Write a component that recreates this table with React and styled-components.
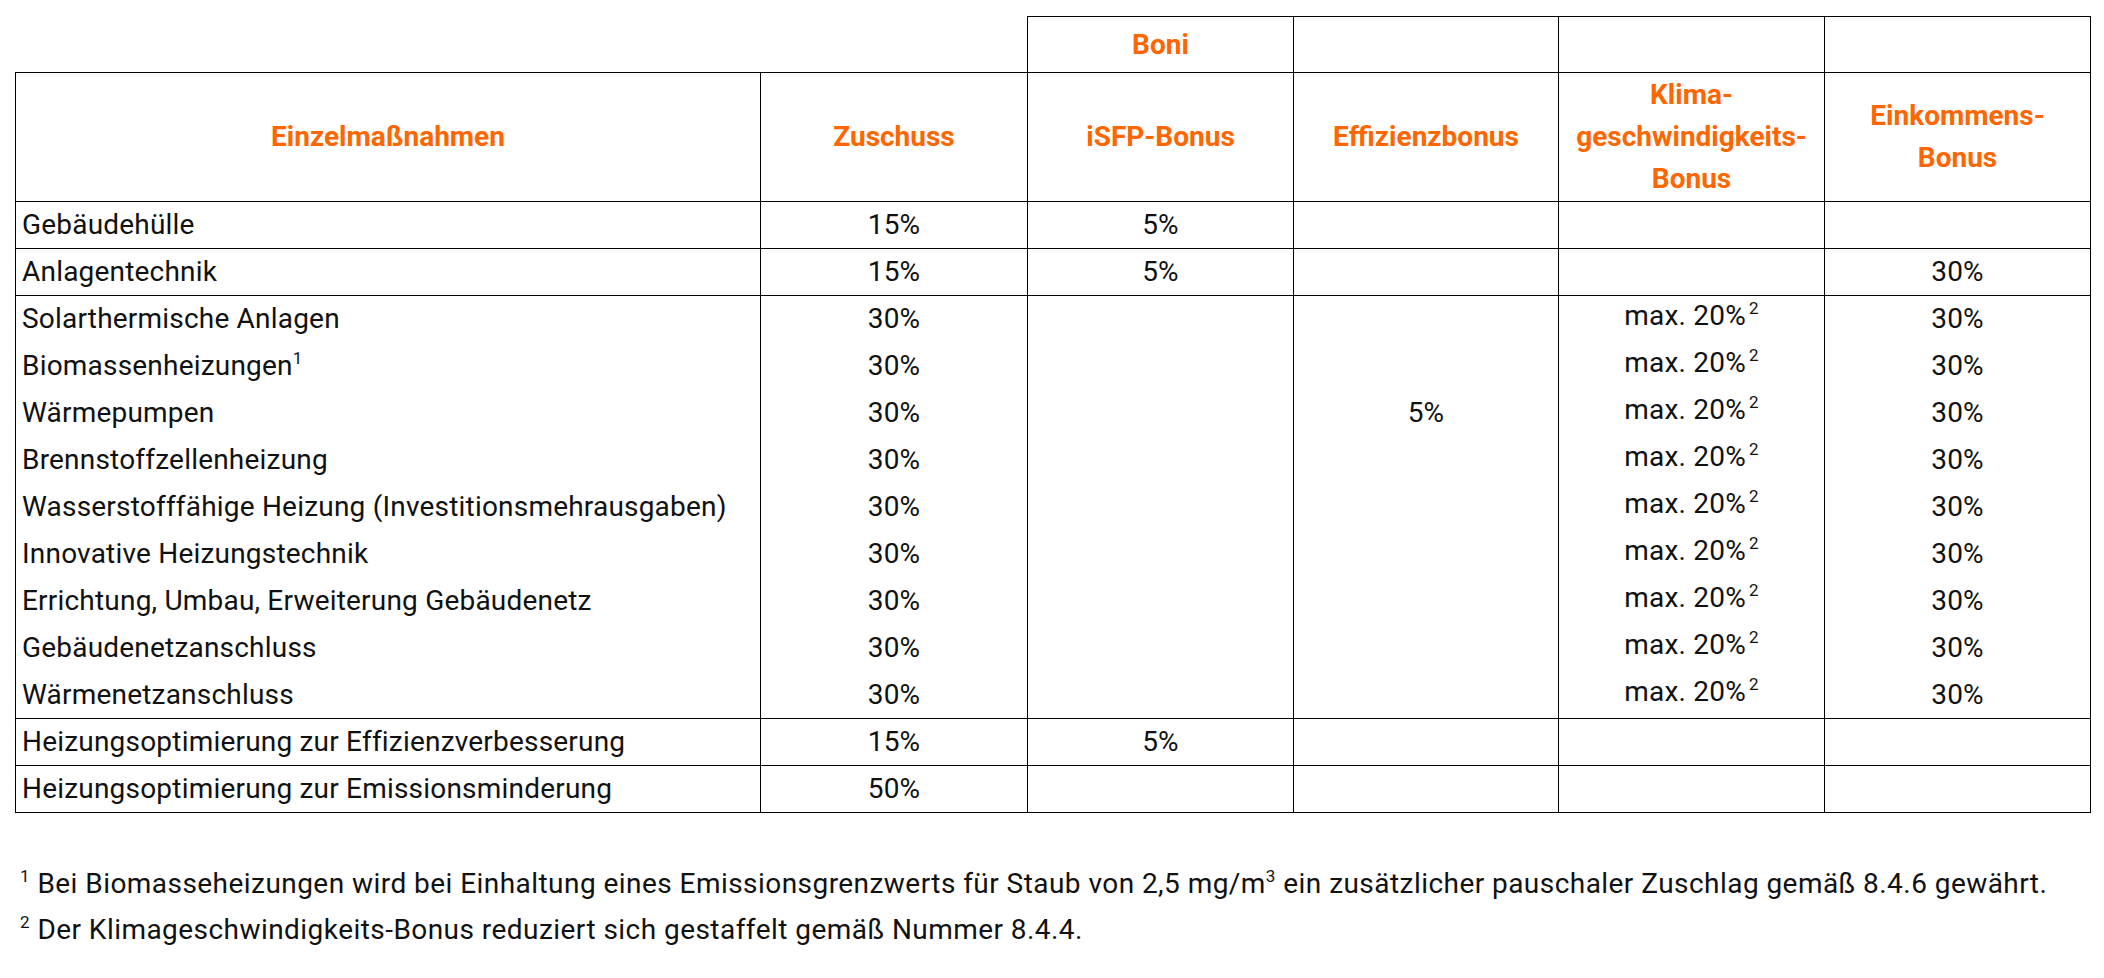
import React from 'react'
import styled, { createGlobalStyle } from 'styled-components'

const GlobalStyle = createGlobalStyle`
  html, body {
    margin: 0;
    padding: 0;
    background: #ffffff;
  }
  body {
    font-family: Roboto, "Liberation Sans", Arial, sans-serif;
    color: #111111;
  }
`

const Page = styled.div`
  padding: 16px 14px 0 15px;
`

const Table = styled.table`
  border-collapse: collapse;
  table-layout: fixed;
  width: 2075px;
  font-size: 28px;
`

const Col = styled.col`
  width: ${p => p.$w}px;
`

const TopRow = styled.tr`
  height: 56px;
`

const HeadRow = styled.tr`
  height: 129px;
`

const HeadCell = styled.th`
  border: ${p => (p.$blank ? 'none' : '1px solid #000')};
  color: #ff6600;
  font-weight: 700;
  font-size: 28px;
  line-height: 42px;
  text-align: center;
  vertical-align: middle;
  padding: 0 4px;
`

const Row = styled.tr`
  height: 47px;

  td {
    border-top: ${p => (p.$cont ? 'none' : '1px solid #000')};
  }

  &:last-child td {
    border-bottom: 1px solid #000;
  }
`

const Cell = styled.td`
  border-left: 1px solid #000;
  border-right: 1px solid #000;
  padding: 0 6px ${p => (p.$lift ? '6px' : '0')};
  text-align: ${p => (p.$left ? 'left' : 'center')};
  vertical-align: middle;
  line-height: 1.2;
  letter-spacing: 0.2px;
  white-space: nowrap;
`

const Sup = styled.sup`
  font-size: 17px;
  line-height: 0;
  vertical-align: 11px;
  margin-left: ${p => (p.$gap ? '3px' : '0')};
`

const Notes = styled.div`
  margin-top: 48px;
  padding-left: 5px;
  font-size: 28px;
  line-height: 46px;
  letter-spacing: 0.45px;
`

const Note = styled.p`
  margin: 0;
`

const widths = [745, 267, 266, 265, 266, 266]

const klima = (
  <>
    max. 20%<Sup $gap>2</Sup>
  </>
)

const rows = [
  { name: 'Gebäudehülle', zuschuss: '15%', isfp: '5%' },
  { name: 'Anlagentechnik', zuschuss: '15%', isfp: '5%', einkommen: '30%' },
  { name: 'Solarthermische Anlagen', zuschuss: '30%', klima, einkommen: '30%' },
  {
    name: <>Biomassenheizungen<Sup>1</Sup></>,
    zuschuss: '30%', klima, einkommen: '30%', cont: true,
  },
  { name: 'Wärmepumpen', zuschuss: '30%', effizienz: '5%', klima, einkommen: '30%', cont: true },
  { name: 'Brennstoffzellenheizung', zuschuss: '30%', klima, einkommen: '30%', cont: true },
  {
    name: 'Wasserstofffähige Heizung (Investitionsmehrausgaben)',
    zuschuss: '30%', klima, einkommen: '30%', cont: true,
  },
  { name: 'Innovative Heizungstechnik', zuschuss: '30%', klima, einkommen: '30%', cont: true },
  {
    name: 'Errichtung, Umbau, Erweiterung Gebäudenetz',
    zuschuss: '30%', klima, einkommen: '30%', cont: true,
  },
  { name: 'Gebäudenetzanschluss', zuschuss: '30%', klima, einkommen: '30%', cont: true },
  { name: 'Wärmenetzanschluss', zuschuss: '30%', klima, einkommen: '30%', cont: true },
  { name: 'Heizungsoptimierung zur Effizienzverbesserung', zuschuss: '15%', isfp: '5%' },
  { name: 'Heizungsoptimierung zur Emissionsminderung', zuschuss: '50%' },
]

function App() {
  return (
    <Page>
      <GlobalStyle />
      <Table>
        <colgroup>
          {widths.map((w, i) => (
            <Col key={i} $w={w} />
          ))}
        </colgroup>
        <thead>
          <TopRow>
            <HeadCell $blank />
            <HeadCell $blank />
            <HeadCell>Boni</HeadCell>
            <HeadCell />
            <HeadCell />
            <HeadCell />
          </TopRow>
          <HeadRow>
            <HeadCell>Einzelmaßnahmen</HeadCell>
            <HeadCell>Zuschuss</HeadCell>
            <HeadCell>iSFP-Bonus</HeadCell>
            <HeadCell>Effizienzbonus</HeadCell>
            <HeadCell>
              Klima-
              <br />
              geschwindigkeits-
              <br />
              Bonus
            </HeadCell>
            <HeadCell>
              Einkommens-
              <br />
              Bonus
            </HeadCell>
          </HeadRow>
        </thead>
        <tbody>
          {rows.map((r, i) => (
            <Row key={i} $cont={r.cont}>
              <Cell $left>{r.name}</Cell>
              <Cell>{r.zuschuss}</Cell>
              <Cell>{r.isfp}</Cell>
              <Cell>{r.effizienz}</Cell>
              <Cell $lift={!!r.klima}>{r.klima}</Cell>
              <Cell>{r.einkommen}</Cell>
            </Row>
          ))}
        </tbody>
      </Table>
      <Notes>
        <Note>
          <Sup>1</Sup> Bei Biomasseheizungen wird bei Einhaltung eines Emissionsgrenzwerts für Staub
          von 2,5 mg/m<Sup>3</Sup> ein zusätzlicher pauschaler Zuschlag gemäß 8.4.6 gewährt.
        </Note>
        <Note>
          <Sup>2</Sup> Der Klimageschwindigkeits-Bonus reduziert sich gestaffelt gemäß Nummer 8.4.4.
        </Note>
      </Notes>
    </Page>
  )
}

export default App
